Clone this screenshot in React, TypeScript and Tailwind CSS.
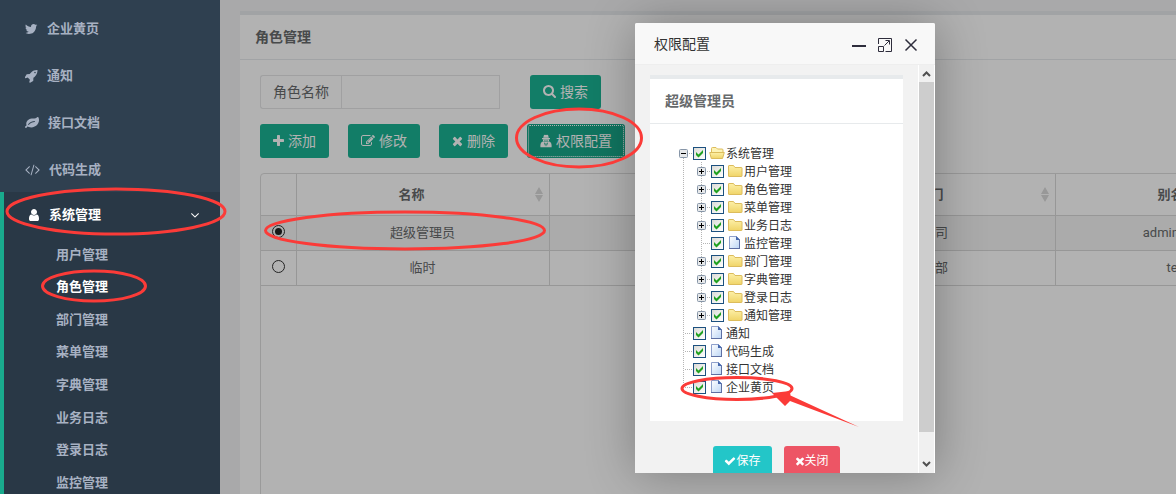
import React from 'react';

const ICONS = {
    twitter: 'M1684 408q-67 98-162 167 1 14 1 42 0 130-38 259.5t-115.5 248.5-184.5 210.5-258 146-323 54.5q-271 0-496-145 35 4 78 4 225 0 401-138-105-2-188-64.5t-114-159.5q33 5 61 5 43 0 85-11-112-23-185.5-111.5t-73.5-205.5v-4q68 38 146 41-66-44-105-115t-39-154q0-88 44-163 121 149 294.5 238.5t371.5 99.5q-8-38-8-74 0-134 94.5-228.5t228.5-94.5q140 0 236 102 109-21 205-78-37 115-142 178 93-10 186-50z',
    rocket: 'M1440 448q0-40-28-68t-68-28-68 28-28 68 28 68 68 28 68-28 28-68zm224-288q0 249-75.5 430.5t-253.5 360.5q-81 80-195 176l-20 379q-2 16-16 26l-384 224q-7 4-16 4-12 0-23-9l-64-64q-13-14-8-32l85-276-281-281-276 85q-3 1-9 1-14 0-23-9l-64-64q-17-19-5-39l224-384q10-14 26-16l379-20q96-114 176-195 188-187 358-258t431-71q14 0 24 9.5t10 22.5z',
    leaf: 'M1280 704q0-26-19-45t-45-19q-172 0-318 49.5t-259.5 134-235.5 219.5q-19 21-19 45 0 26 19 45t45 19q24 0 45-19 27-24 74-71t67-66q137-124 268.5-176t313.5-52q26 0 45-19t19-45zm512-198q0 95-20 193-46 224-184.5 383t-357.5 268q-214 108-438 108-148 0-286-47-15-5-88-42t-96-37q-16 0-39.5 32t-45 70-52.5 70-60 32q-43 0-63.5-17.5t-45.5-59.5q-2-4-6-11t-5.5-10-3-9.5-1.5-13.5q0-35 31-73.5t68-65.5 68-56 31-48q0-4-14-38t-16-44q-9-51-9-104 0-115 43.5-220t119-184.5 170.5-139 204-95.5q55-18 145-25.5t179.5-9 178.5-6 163.5-24 113.5-56.5l29.5-29.5 29.5-28 27-20 36.5-16 43.5-4.5q39 0 70.5 46t47.5 112 24 124 8 96z',
    code: 'M681 1399l-50 50q-10 10-23 10t-23-10l-466-466q-10-10-10-23t10-23l466-466q10-10 23-10t23 10l50 50q10 10 10 23t-10 23l-393 393 393 393q10 10 10 23t-10 23zm591-1067l-373 1291q-4 13-15.5 19.5t-23.5 2.5l-62-17q-13-4-19.5-15.5t-2.5-24.5l373-1291q4-13 15.5-19.5t23.5-2.5l62 17q13 4 19.5 15.5t2.5 24.5zm657 651l-466 466q-10 10-23 10t-23-10l-50-50q-10-10-10-23t10-23l393-393-393-393q-10-10-10-23t10-23l50-50q10-10 23-10t23 10l466 466q10 10 10 23t-10 23z',
    user: 'M1536 1399q0 109-62.5 187t-150.5 78h-854q-88 0-150.5-78t-62.5-187q0-85 8.5-160.5t31.5-152 58.5-131 94-89 134.5-34.5q131 128 313 128t313-128q76 0 134.5 34.5t94 89 58.5 131 31.5 152 8.5 160.5zm-256-887q0 159-112.5 271.5t-271.5 112.5-271.5-112.5-112.5-271.5 112.5-271.5 271.5-112.5 271.5 112.5 112.5 271.5z',
    angleDown: 'M1395 736q0 13-10 23l-466 466q-10 10-23 10t-23-10l-466-466q-10-10-10-23t10-23l50-50q10-10 23-10t23 10l393 393 393-393q10-10 23-10t23 10l50 50q10 10 10 23z',
    search: 'M1216 832q0-185-131.5-316.5t-316.5-131.5-316.5 131.5-131.5 316.5 131.5 316.5 316.5 131.5 316.5-131.5 131.5-316.5zm512 832q0 52-38 90t-90 38q-54 0-90-38l-343-342q-179 124-399 124-143 0-273.5-55.5t-225-150-150-225-55.5-273.5 55.5-273.5 150-225 225-150 273.5-55.5 273.5 55.5 225 150 150 225 55.5 273.5q0 220-124 399l343 343q37 37 37 90z',
    plus: 'M1600 736v192q0 40-28 68t-68 28h-416v416q0 40-28 68t-68 28h-192q-40 0-68-28t-28-68v-416h-416q-40 0-68-28t-28-68v-192q0-40 28-68t68-28h416v-416q0-40 28-68t68-28h192q40 0 68 28t28 68v416h416q40 0 68 28t28 68z',
    edit: 'M888 1184l116-116-152-152-116 116v56h96v96h56zm440-720q-16-16-33 1l-350 350q-17 17-1 33t33-1l350-350q17-17 1-33zm80 594v190q0 119-84.5 203.5t-203.5 84.5h-832q-119 0-203.5-84.5t-84.5-203.5v-832q0-119 84.5-203.5t203.5-84.5h832q63 0 117 25 15 7 18 23 3 17-9 29l-49 49q-14 14-32 8-23-6-45-6h-832q-66 0-113 47t-47 113v832q0 66 47 113t113 47h832q66 0 113-47t47-113v-126q0-13 9-22l64-64q15-15 35-7t20 29zm-96-738l288 288-672 672h-288v-288zm444 132l-92 92-288-288 92-92q28-28 68-28t68 28l152 152q28 28 28 68t-28 68z',
    times: 'M1490 1322q0 40-28 68l-136 136q-28 28-68 28t-68-28l-294-294-294 294q-28 28-68 28t-68-28l-136-136q-28-28-28-68t28-68l294-294-294-294q-28-28-28-68t28-68l136-136q28-28 68-28t68 28l294 294 294-294q28-28 68-28t68 28l136 136q28 28 28 68t-28 68l-294 294 294 294q28 28 28 68z',
    check: 'M1671 566q0 40-28 68l-724 724-136 136q-28 28-68 28t-68-28l-136-136-362-362q-28-28-28-68t28-68l136-136q28-28 68-28t68 28l294 295 656-657q28-28 68-28t68 28l136 136q28 28 28 68z',
    secret: 'M3.800 1.500q.2-.7 1-.7.6 0 1.200.3.6-.3 1.200-.3.800 0 1 .7l.6 2.200h-5.600zM2 4h8v1.200h-8zM3 5.500h6v1.800h-.6l-.8-.8h-1l-.6.6-.6-.6h-1l-.8.800h-.600zM.4 13.200v-2.200q0-2.800 2.300-3.400h6.600q2.300.6 2.300 3.400v2.200zM4 8.500l1.200 4 .5-2.400-.6-1.200zM8 8.500l-1.100.4-.6 1.200.5 2.400z',
};

type IconName = keyof typeof ICONS;

interface IconProps {
    name: IconName;
    className: string;
    viewBox?: string;
}

const Icon: React.FC<IconProps> = ({ name, className, viewBox = '0 0 1792 1792' }) => (
    <svg viewBox={viewBox} fill="currentColor" className={`shrink-0 ${className}`} aria-hidden="true">
        <path d={ICONS[name]} fillRule={name === 'secret' ? 'evenodd' : 'nonzero'} />
    </svg>
);

interface TreeNode {
    name: string;
    children?: TreeNode[];
    folder?: boolean;
}

const MENU: { name: string; icon: IconName; size: string; viewBox: string }[] = [
    { name: '企业黄页', icon: 'twitter', size: 'w-[13px]', viewBox: '108 0 1664 1792' },
    { name: '通知', icon: 'rocket', size: 'w-[13px]', viewBox: '64 0 1664 1792' },
    { name: '接口文档', icon: 'leaf', size: 'w-[14px]', viewBox: '0 0 1792 1792' },
    { name: '代码生成', icon: 'code', size: 'w-[15px]', viewBox: '64 64 1920 1792' },
];

const SUB_MENU = ['用户管理', '角色管理', '部门管理', '菜单管理', '字典管理', '业务日志', '登录日志', '监控管理'];

const ROLES = [
    { name: '超级管理员', parent: '--', dept: '总公司', alias: 'administrator' },
    { name: '临时', parent: '超级管理员', dept: '运营部', alias: 'temp' },
];

const TREE: TreeNode[] = [
    {
        name: '系统管理',
        folder: true,
        children: [
            { name: '用户管理', folder: true },
            { name: '角色管理', folder: true },
            { name: '菜单管理', folder: true },
            { name: '业务日志', folder: true },
            { name: '监控管理' },
            { name: '部门管理', folder: true },
            { name: '字典管理', folder: true },
            { name: '登录日志', folder: true },
            { name: '通知管理', folder: true },
        ],
    },
    { name: '通知' },
    { name: '代码生成' },
    { name: '接口文档' },
    { name: '企业黄页' },
];

const Sidebar = () => (
    <nav className="w-[220px] shrink-0 overflow-hidden bg-[#2f4050] pt-1 text-[13px] font-bold text-[#a7b1c2]">
        {MENU.map((item) => (
            <a key={item.name} href="#" className="flex h-[47px] items-center gap-[9px] pt-[2px] pl-[25px]">
                <Icon name={item.icon} viewBox={item.viewBox} className={`h-[14px] ${item.size}`} />
                <span>{item.name}</span>
            </a>
        ))}
        <div className="border-l-4 border-[#19aa8d] bg-[#293846]">
            <a href="#" className="flex h-[46px] items-center gap-[9px] pr-[18px] pl-6 text-white">
                <Icon name="user" viewBox="128 0 1536 1792" className="h-[14px] w-3" />
                <span className="flex-1">系统管理</span>
                <Icon name="angleDown" className="size-[14px]" />
            </a>
            <ul className="grid h-[261px] grid-rows-8">
                {SUB_MENU.map((name) => (
                    <li key={name} className="flex items-center pl-[52px]">
                        <a href="#" className={name === '角色管理' ? 'text-white' : ''}>{name}</a>
                    </li>
                ))}
            </ul>
        </div>
    </nav>
);

const SortArrows = () => (
    <svg viewBox="0 0 8 15" className="h-[15px] w-2 fill-[#dadada]" aria-hidden="true">
        <path d="M0 7 4 0l4 7zM0 8h8l-4 7z" />
    </svg>
);

interface ToolButtonProps {
    icon: IconName;
    label: string;
    size: string;
    viewBox: string;
    active?: boolean;
}

const ToolButton: React.FC<ToolButtonProps> = ({ icon, label, size, viewBox, active }) => (
    <button
        className={`flex h-[34px] items-center gap-1 rounded-[3px] px-[13px] text-sm text-white ${
            active ? 'bg-[#18a689] outline-1 -outline-offset-2 outline-dotted outline-white' : 'bg-[#1ab394]'
        }`}
    >
        <Icon name={icon} viewBox={viewBox} className={`h-[14px] ${size}`} />
        {label}
    </button>
);

const RoleTable = () => (
    <div className="mt-[15px] min-h-[340px] w-[1302px] overflow-hidden rounded border border-[#ddd]">
        <table className="w-full table-fixed text-center text-[13px]">
            <thead>
                <tr className="h-[41px] border-b border-[#d8d8d8]">
                    <th className="w-[35px] border-r border-[#d8d8d8]" />
                    {['名称', '上级角色', '所在部门', '别名', '操作'].map((title) => (
                        <th key={title} className="w-[253px] border-r border-[#d8d8d8] pr-[6px]">
                            <div className="flex items-center">
                                <span className="flex-1 pr-2">{title}</span>
                                <SortArrows />
                            </div>
                        </th>
                    ))}
                </tr>
            </thead>
            <tbody>
                {ROLES.map((role, i) => (
                    <tr key={role.name} className={`h-[35px] border-b border-[#d8d8d8] ${i === 0 ? 'bg-[#f5f5f5]' : ''}`}>
                        <td className="border-r border-[#d8d8d8] pt-[9px] align-top">
                            <input
                                type="radio"
                                name="role"
                                aria-label={role.name}
                                defaultChecked={i === 0}
                                className="mx-auto grid size-[13px] appearance-none place-content-center rounded-full border border-[#333] before:size-[7px] before:rounded-full checked:before:bg-[#222]"
                            />
                        </td>
                        <td className="border-r border-[#d8d8d8]">{role.name}</td>
                        <td className="border-r border-[#d8d8d8]">{role.parent}</td>
                        <td className="border-r border-[#d8d8d8]">{role.dept}</td>
                        <td className="border-r border-[#d8d8d8]">{role.alias}</td>
                        <td />
                    </tr>
                ))}
            </tbody>
        </table>
    </div>
);

const RolePage = () => (
    <main className="relative min-w-0 flex-1 overflow-hidden bg-[#f3f3f4] pt-[11px] pl-5">
        <section className="min-h-screen border-t-4 border-[#e7eaec] bg-white">
            <h5 className="flex h-[45px] items-center border-b border-[#e7eaec] pl-[15px] text-sm font-bold">角色管理</h5>
            <div className="pt-[15px] pl-5">
                <div className="flex gap-[30px]">
                    <div className="flex h-[34px] w-[240px] text-sm">
                        <label htmlFor="role-name" className="flex shrink-0 items-center rounded-l-[3px] border border-r-0 border-[#e5e6e7] px-3">
                            角色名称
                        </label>
                        <input id="role-name" className="w-full min-w-0 border border-[#e5e6e7] px-3 outline-none" />
                    </div>
                    <ToolButton icon="search" label="搜索" size="w-[13px]" viewBox="64 128 1664 1792" />
                </div>
                <div className="mt-[15px] flex gap-[19px]">
                    <ToolButton icon="plus" label="添加" size="w-[11px]" viewBox="192 0 1408 1792" />
                    <ToolButton icon="edit" label="修改" size="w-[14px]" viewBox="0 0 1792 1792" />
                    <ToolButton icon="times" label="删除" size="w-[11px]" viewBox="192 0 1408 1792" />
                    <ToolButton icon="secret" label="权限配置" size="w-[12px]" viewBox="0 0 12 14" active />
                </div>
                <RoleTable />
            </div>
        </section>
        <div className="absolute inset-0 bg-black/30" />
    </main>
);

const Switch: React.FC<{ kind: 'open' | 'closed' | 'none'; top: boolean; bottom: boolean }> = ({ kind, top, bottom }) => (
    <svg viewBox="0 0 18 18" className="size-[18px] shrink-0" aria-hidden="true">
        <g stroke="#b5b5b5" strokeDasharray="1 1">
            {top && <path d="M8.500 0v9" />}
            {bottom && <path d="M8.500 10v8" />}
            <path d="M10 9.500h8" />
        </g>
        {kind !== 'none' && (
            <>
                <rect x="4.500" y="5.500" width="8" height="8" rx="1" fill="#e6e8ea" stroke="#8796a8" />
                <path d={kind === 'open' ? 'M6 9.500h5' : 'M6 9.500h5M8.500 7v5'} stroke="#000" />
            </>
        )}
    </svg>
);

const TreeIcon: React.FC<{ kind: 'open' | 'folder' | 'file' }> = ({ kind }) => (
    <svg viewBox="0 0 16 16" className="size-4 shrink-0" aria-hidden="true">
        {kind === 'file' && (
            <>
                <path d="M2.500 1.500h7l3 3v9h-10z" fill="url(#page)" stroke="#8ea0cc" />
                <path d="M9 1v4h4z" fill="#4668ad" />
                <path d="M12.500 4.500v9.500M2 13.500h11" stroke="#5d6fa3" />
            </>
        )}
        {kind === 'folder' && (
            <path d="M1.500 3q0-.5.5-.5h4.500l1.500 2h6.500q.5 0 .5.5v8q0 .5-.5.5h-12.500q-.5 0-.5-.5z" fill="url(#folder)" stroke="#dcbc5c" />
        )}
        {kind === 'open' && (
            <>
                <path d="M2.500 8v-4.500q0-1 1-1h3.500l1.500 1.500h4.500q1 0 1 1v4" fill="#fdf3b5" stroke="#dcbc5c" />
                <path d="M.7 7.500h14.600l-1.800 6h-11.200z" fill="url(#folder)" stroke="#dcbc5c" />
            </>
        )}
    </svg>
);

const TreeRow: React.FC<{ node: TreeNode; level: number; first: boolean; last: boolean }> = ({ node, level, first, last }) => {
    const kind = node.children ? 'open' : node.folder ? 'folder' : 'file';
    return (
        <li>
            <label className="flex h-[18px] items-center text-xs whitespace-nowrap text-[#333]">
                {level > 0 && (
                    <svg viewBox="0 0 18 18" className="size-[18px] shrink-0" aria-hidden="true">
                        <path d="M8.500 0v18" stroke="#b5b5b5" strokeDasharray="1 1" />
                    </svg>
                )}
                <Switch kind={node.children ? 'open' : node.folder ? 'closed' : 'none'} top={!first} bottom={!last} />
                <span className="relative mt-px mr-[3px] size-[13px] shrink-0">
                    <input
                        type="checkbox"
                        defaultChecked
                        className="block size-[13px] appearance-none border border-[#1c5180] bg-linear-to-br from-[#dcdcd7] to-white"
                    />
                    <svg viewBox="0 0 13 13" className="pointer-events-none absolute inset-0 size-[13px]" aria-hidden="true">
                        <path d="M3 5 5.500 7.500 10 3v3l-4.500 4.500L3 8z" fill="#21a121" />
                    </svg>
                </span>
                <TreeIcon kind={kind} />
                <span className="pt-[2px] pl-px">{node.name}</span>
            </label>
            {node.children && (
                <ul>
                    {node.children.map((child, i) => (
                        <TreeRow key={child.name} node={child} level={level + 1} first={false} last={i === node.children!.length - 1} />
                    ))}
                </ul>
            )}
        </li>
    );
};

const ScrollBar = () => (
    <div className="flex w-[17px] shrink-0 flex-col border-r border-l border-white bg-[#f0f0f0]">
        <svg viewBox="0 0 15 17" className="h-[17px] w-full fill-none stroke-[#505050] stroke-2" aria-hidden="true">
            <path d="M4 11l3.500-3.500 3.500 3.500" />
        </svg>
        <div className="mb-6 flex-1 bg-[#cdcdcd]" />
        <svg viewBox="0 0 15 17" className="h-[17px] w-full fill-none stroke-[#505050] stroke-2" aria-hidden="true">
            <path d="M4 6l3.500 3.500 3.500-3.500" />
        </svg>
    </div>
);

const PermissionDialog = () => (
    <div
        role="dialog"
        aria-label="权限配置"
        className="absolute top-[23px] left-[635px] flex h-[450px] w-[300px] flex-col overflow-hidden rounded-t-[2px] bg-[#f2f2f2] shadow-[1px_1px_50px_rgba(0,0,0,0.3)]"
    >
        <div className="flex h-[42px] shrink-0 items-center border-b border-[#eee] bg-[#f8f8f8] pr-[17px] pl-[19px] text-sm text-[#333]">
            <span className="flex-1">权限配置</span>
            <div className="flex items-center gap-3 pt-[2px] text-[#2e2d3c]">
                <button aria-label="最小化">
                    <svg viewBox="0 0 14 14" className="size-[14px]">
                        <path d="M0 8h14" stroke="currentColor" strokeWidth="2" />
                    </svg>
                </button>
                <button aria-label="最大化">
                    <svg viewBox="0 0 14 14" className="size-[14px] fill-none stroke-current">
                        <path d="M.5 6v-5.500h13v13h-6M.5 8.500h5v5h-5zM6.500 7.500l4.500-4.500M7.500 2.500h4v4" />
                    </svg>
                </button>
                <button aria-label="关闭窗口">
                    <svg viewBox="0 0 14 14" className="size-[14px]">
                        <path d="M1.500 1.500l11 11M12.500 1.500l-11 11" stroke="currentColor" strokeWidth="1.500" />
                    </svg>
                </button>
            </div>
        </div>
        <div className="flex min-h-0 flex-1">
            <div className="min-w-0 flex-1 overflow-hidden px-[15px] pt-[10px]">
                <section className="border-t-4 border-[#e7eaec] bg-white">
                    <h5 className="flex h-[45px] items-center border-b border-[#e7eaec] pl-[15px] text-sm font-bold">超级管理员</h5>
                    <ul className="px-[25px] pt-5 pb-[25px]">
                        {TREE.map((node, i) => (
                            <TreeRow key={node.name} node={node} level={0} first={i === 0} last={i === TREE.length - 1} />
                        ))}
                    </ul>
                </section>
                <div className="mt-[25px] flex justify-center gap-3 text-xs text-white">
                    <button className="flex h-[30px] items-center rounded-[3px] bg-[#23c6c8] px-[11px]">
                        <Icon name="check" className="size-3" />
                        保存
                    </button>
                    <button className="flex h-[30px] items-center rounded-[3px] bg-[#ed5565] px-[11px]">
                        <Icon name="times" viewBox="192 0 1408 1792" className="h-3 w-[10px]" />
                        关闭
                    </button>
                </div>
            </div>
            <ScrollBar />
        </div>
    </div>
);

// hand-drawn style marks pointing out the steps
const Marks = () => (
    <svg viewBox="0 0 1176 494" width="1176" height="494" className="pointer-events-none absolute top-0 left-0" aria-hidden="true">
        <g fill="none" stroke="#fb3b38" strokeWidth="3">
            <ellipse cx="116" cy="211.500" rx="109" ry="22.500" />
            <ellipse cx="94" cy="286" rx="51.500" ry="15" />
            <ellipse cx="579" cy="138" rx="62.500" ry="29" />
            <ellipse cx="405" cy="230.500" rx="139.500" ry="18.500" />
            <ellipse cx="737" cy="388.500" rx="55" ry="11" />
        </g>
        <path d="M772 393l18-2 .5 4.500L859 427l-69-26-5 5z" fill="#fb3b38" />
    </svg>
);

export default function App() {
    return (
        <div className="relative flex h-screen overflow-hidden bg-[#2f4050] font-[Roboto,'Noto_Sans_CJK_SC',sans-serif] text-[13px] text-[#676a6c]">
            <svg className="absolute size-0" aria-hidden="true">
                <defs>
                    <linearGradient id="folder" x1="0" y1="0" x2="0" y2="1">
                        <stop offset="0" stopColor="#fdf0a8" />
                        <stop offset="1" stopColor="#f0d468" />
                    </linearGradient>
                    <linearGradient id="page" x1="0" y1="0" x2="1" y2="1">
                        <stop offset="0" stopColor="#fff" />
                        <stop offset="1" stopColor="#bcd6f5" />
                    </linearGradient>
                </defs>
            </svg>
            <Sidebar />
            <RolePage />
            <PermissionDialog />
            <Marks />
        </div>
    );
}
